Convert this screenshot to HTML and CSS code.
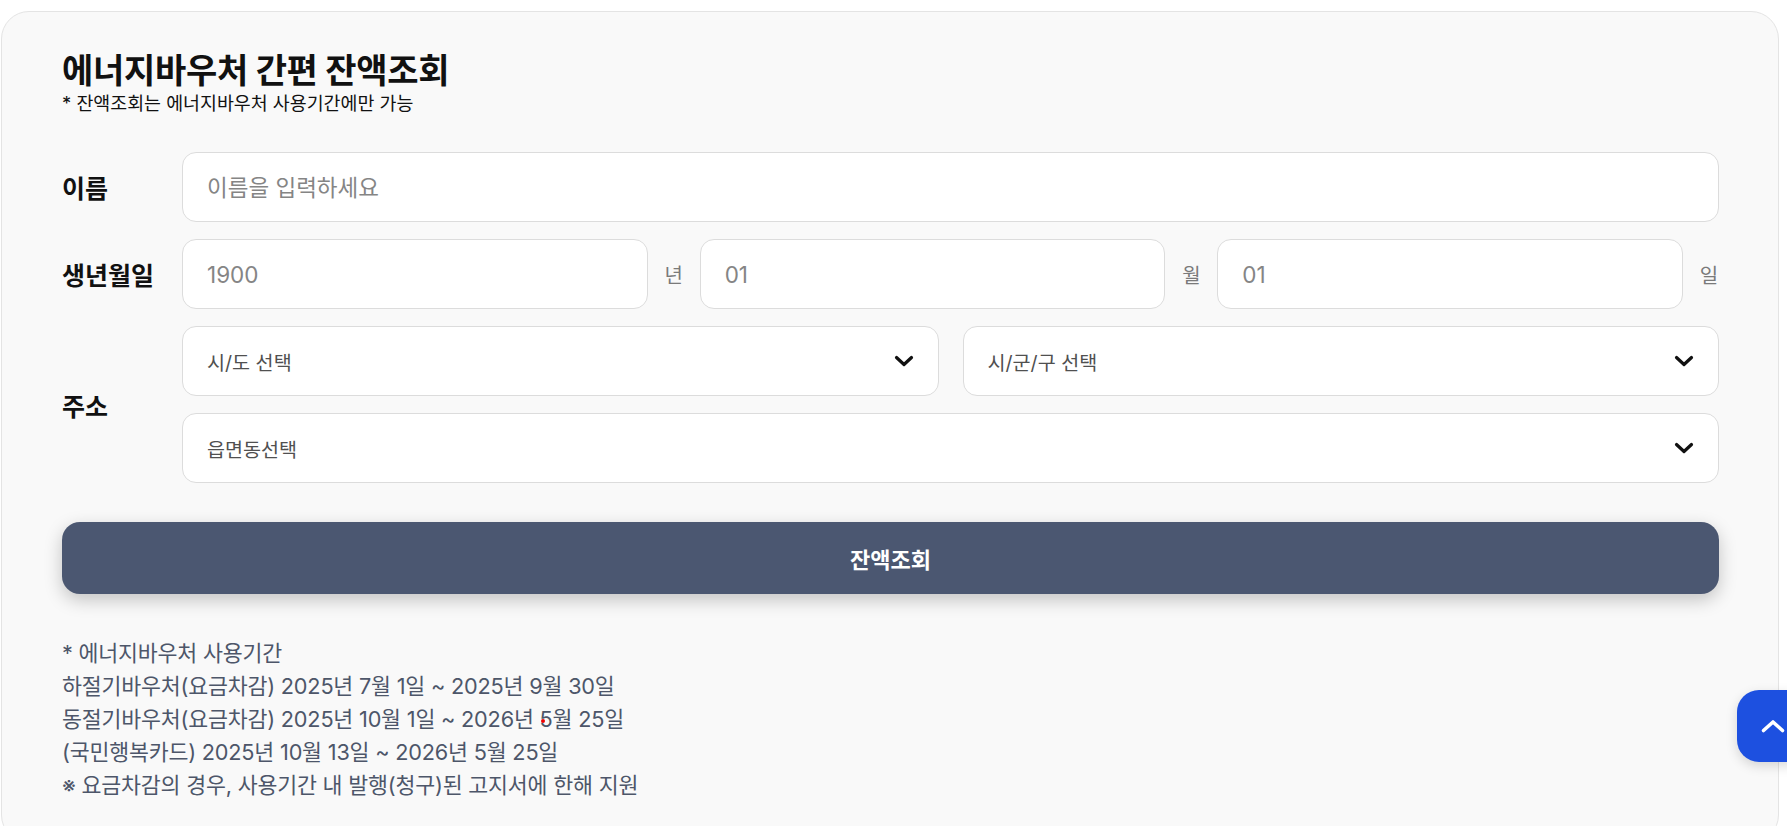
FILE: index.html
```html
<!DOCTYPE html>
<html lang="ko">
<head>
    <meta charset="UTF-8">
    <title>에너지바우처 간편 잔액조회</title>
    <link rel="stylesheet" href="styles.css">
</head>
<body>
    <!-- 잔액조회 카드 -->
    <div class="card">
        <div class="card-head">
            <h1>에너지바우처 간편 잔액조회</h1>
            <p class="sub">* 잔액조회는 에너지바우처 사용기간에만 가능</p>
        </div>

        <form class="balance-form">
            <div class="row">
                <label class="label" for="name">이름</label>
                <div class="field">
                    <input class="input" type="text" id="name" placeholder="이름을 입력하세요">
                </div>
            </div>

            <div class="row">
                <label class="label" for="year">생년월일</label>
                <div class="field birth">
                    <input class="input" type="text" id="year" placeholder="1900">
                    <span class="unit">년</span>
                    <input class="input" type="text" placeholder="01">
                    <span class="unit">월</span>
                    <input class="input" type="text" placeholder="01">
                    <span class="unit">일</span>
                </div>
            </div>

            <div class="row">
                <label class="label">주소</label>
                <div class="field addr">
                    <div class="addr-top">
                        <div class="select">
                            <span>시/도 선택</span>
                            <svg width="20" height="12" viewBox="0 0 20 12"><path d="M2.5 2.5 L10 9.5 L17.5 2.5" fill="none" stroke="#111" stroke-width="3.2" stroke-linecap="round" stroke-linejoin="round"/></svg>
                        </div>
                        <div class="select">
                            <span>시/군/구 선택</span>
                            <svg width="20" height="12" viewBox="0 0 20 12"><path d="M2.5 2.5 L10 9.5 L17.5 2.5" fill="none" stroke="#111" stroke-width="3.2" stroke-linecap="round" stroke-linejoin="round"/></svg>
                        </div>
                    </div>
                    <div class="select">
                        <span>읍면동선택</span>
                        <svg width="20" height="12" viewBox="0 0 20 12"><path d="M2.5 2.5 L10 9.5 L17.5 2.5" fill="none" stroke="#111" stroke-width="3.2" stroke-linecap="round" stroke-linejoin="round"/></svg>
                    </div>
                </div>
            </div>

            <button type="button" class="submit">잔액조회</button>
        </form>

        <!-- 사용기간 안내 -->
        <div class="notes">
            <p>* 에너지바우처 사용기간</p>
            <p>하절기바우처(요금차감) 2025년 7월 1일 ~ 2025년 9월 30일</p>
            <p>동절기바우처(요금차감) 2025년 10월 1일 ~ 2026년 <span class="mark">5</span>월 25일</p>
            <p>(국민행복카드) 2025년 10월 13일 ~ 2026년 5월 25일</p>
            <p>※ 요금차감의 경우, 사용기간 내 발행(청구)된 고지서에 한해 지원</p>
        </div>
    </div>

    <!-- 맨 위로 -->
    <button type="button" class="to-top" aria-label="맨 위로">
        <svg width="26" height="16" viewBox="0 0 26 16"><path d="M3.5 12.5 L13 4 L22.5 12.5" fill="none" stroke="#fff" stroke-width="3.6" stroke-linecap="round" stroke-linejoin="round"/></svg>
    </button>
</body>
</html>
```

FILE: styles.css
```css
/* 기본 */
body {
    margin: 0;
    background-color: #fff;
    font-family: Inter, "Noto Sans CJK KR", sans-serif;
    color: #111;
}

/* 카드 */
.card {
    margin: 11px 0 0 1px;
    width: 1778px;
    box-sizing: border-box;
    padding: 39px 59px 40px 60px;
    background-color: #f9f9f9;
    border: 1px solid #e4e4e4;
    border-radius: 28px;
}

.card-head h1 {
    margin: 0;
    font-size: 34px;
    line-height: 40px;
    font-weight: 700;
    letter-spacing: -0.3px;
    color: #111;
}
.card-head .sub {
    margin: 0;
    font-size: 18.4px;
    line-height: 24px;
    color: #111;
}

/* 폼 */
.balance-form {
    margin-top: 37px;
    display: flex;
    flex-direction: column;
    gap: 17px;
}
.row {
    display: flex;
    align-items: center;
}
.label {
    width: 120px;
    flex: none;
    font-size: 25px;
    font-weight: 700;
    color: #111;
}
.field {
    flex: 1;
    display: flex;
}

.input {
    flex: 1;
    min-width: 0;
    height: 70px;
    box-sizing: border-box;
    padding: 0 24px;
    background-color: #fff;
    border: 1px solid #dcdcdc;
    border-radius: 14px;
    font-family: inherit;
    font-size: 22.5px;
    color: #222;
    outline: none;
}
.input::placeholder {
    color: #858585;
}

.birth {
    align-items: center;
    gap: 16px;
}
.unit {
    width: 20px;
    flex: none;
    font-size: 20px;
    color: #7a7a7a;
    text-align: center;
}

.addr {
    flex-direction: column;
    gap: 17px;
}
.addr-top {
    display: flex;
    gap: 24px;
}
.addr-top .select {
    flex: 1;
}
.select {
    height: 70px;
    box-sizing: border-box;
    padding: 0 24px;
    display: flex;
    align-items: center;
    justify-content: space-between;
    background-color: #fff;
    border: 1px solid #dcdcdc;
    border-radius: 14px;
    font-size: 19.6px;
    color: #505050;
}

.submit {
    margin-top: 22px;
    height: 72px;
    border: none;
    border-radius: 18px;
    background-color: #4b5771;
    color: #fff;
    font-family: inherit;
    font-size: 22px;
    font-weight: 700;
    box-shadow: 0 6px 18px rgba(0, 0, 0, 0.22);
    cursor: pointer;
}

/* 안내 */
.notes {
    margin-top: 43px;
    font-size: 21.7px;
    line-height: 33px;
    color: #4d5669;
    letter-spacing: -0.2px;
}
.notes p {
    margin: 0;
}
.mark {
    position: relative;
}
.mark::before {
    content: "";
    position: absolute;
    left: 1px;
    top: 13px;
    width: 4px;
    height: 4px;
    border-radius: 50%;
    background-color: #e00;
}

/* 맨 위로 버튼 */
.to-top {
    position: fixed;
    right: -22px;
    bottom: 64px;
    width: 72px;
    height: 72px;
    border: none;
    border-radius: 22px;
    background-color: #1d50e0;
    box-shadow: 0 4px 12px rgba(0, 0, 0, 0.15);
    display: flex;
    align-items: center;
    justify-content: center;
    padding: 0;
    cursor: pointer;
}
```
